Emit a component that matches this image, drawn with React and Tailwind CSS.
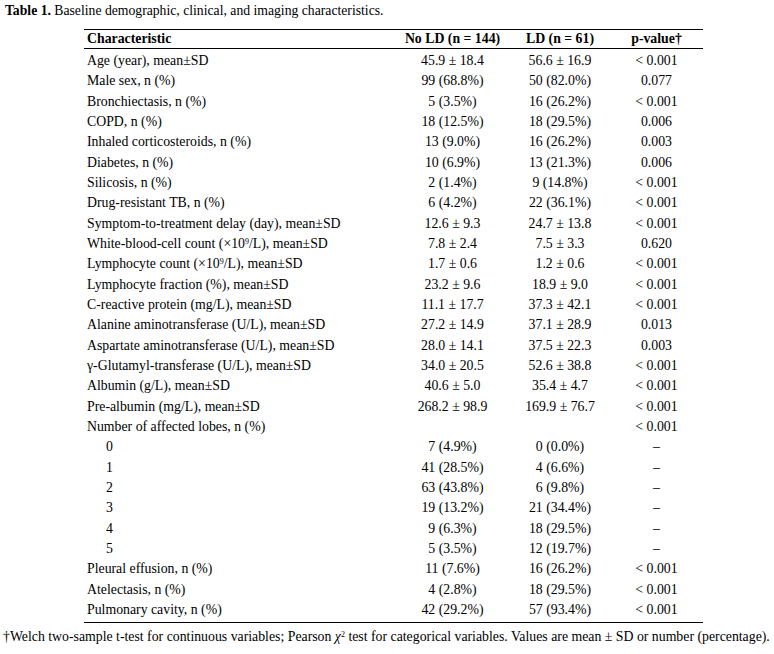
import React from "react";

const rows = [
  { c: "Age (year), mean±SD", a: "45.9 ± 18.4", b: "56.6 ± 16.9", p: "< 0.001" },
  { c: "Male sex, n (%)", a: "99 (68.8%)", b: "50 (82.0%)", p: "0.077" },
  { c: "Bronchiectasis, n (%)", a: "5 (3.5%)", b: "16 (26.2%)", p: "< 0.001" },
  { c: "COPD, n (%)", a: "18 (12.5%)", b: "18 (29.5%)", p: "0.006" },
  { c: "Inhaled corticosteroids, n (%)", a: "13 (9.0%)", b: "16 (26.2%)", p: "0.003" },
  { c: "Diabetes, n (%)", a: "10 (6.9%)", b: "13 (21.3%)", p: "0.006" },
  { c: "Silicosis, n (%)", a: "2 (1.4%)", b: "9 (14.8%)", p: "< 0.001" },
  { c: "Drug-resistant TB, n (%)", a: "6 (4.2%)", b: "22 (36.1%)", p: "< 0.001" },
  { c: "Symptom-to-treatment delay (day), mean±SD", a: "12.6 ± 9.3", b: "24.7 ± 13.8", p: "< 0.001" },
  {
    c: (
      <>
        White-blood-cell count (×10<sup className="text-[8px]">9</sup>/L), mean±SD
      </>
    ),
    a: "7.8 ± 2.4",
    b: "7.5 ± 3.3",
    p: "0.620",
  },
  {
    c: (
      <>
        Lymphocyte count (×10<sup className="text-[8px]">9</sup>/L), mean±SD
      </>
    ),
    a: "1.7 ± 0.6",
    b: "1.2 ± 0.6",
    p: "< 0.001",
  },
  { c: "Lymphocyte fraction (%), mean±SD", a: "23.2 ± 9.6", b: "18.9 ± 9.0", p: "< 0.001" },
  { c: "C-reactive protein (mg/L), mean±SD", a: "11.1 ± 17.7", b: "37.3 ± 42.1", p: "< 0.001" },
  { c: "Alanine aminotransferase (U/L), mean±SD", a: "27.2 ± 14.9", b: "37.1 ± 28.9", p: "0.013" },
  { c: "Aspartate aminotransferase (U/L), mean±SD", a: "28.0 ± 14.1", b: "37.5 ± 22.3", p: "0.003" },
  { c: "γ-Glutamyl-transferase (U/L), mean±SD", a: "34.0 ± 20.5", b: "52.6 ± 38.8", p: "< 0.001" },
  { c: "Albumin (g/L), mean±SD", a: "40.6 ± 5.0", b: "35.4 ± 4.7", p: "< 0.001" },
  { c: "Pre-albumin (mg/L), mean±SD", a: "268.2 ± 98.9", b: "169.9 ± 76.7", p: "< 0.001" },
  { c: "Number of affected lobes, n (%)", a: "", b: "", p: "< 0.001" },
  { c: "0", a: "7 (4.9%)", b: "0 (0.0%)", p: "–", sub: true },
  { c: "1", a: "41 (28.5%)", b: "4 (6.6%)", p: "–", sub: true },
  { c: "2", a: "63 (43.8%)", b: "6 (9.8%)", p: "–", sub: true },
  { c: "3", a: "19 (13.2%)", b: "21 (34.4%)", p: "–", sub: true },
  { c: "4", a: "9 (6.3%)", b: "18 (29.5%)", p: "–", sub: true },
  { c: "5", a: "5 (3.5%)", b: "12 (19.7%)", p: "–", sub: true },
  { c: "Pleural effusion, n (%)", a: "11 (7.6%)", b: "16 (26.2%)", p: "< 0.001" },
  { c: "Atelectasis, n (%)", a: "4 (2.8%)", b: "18 (29.5%)", p: "< 0.001" },
  { c: "Pulmonary cavity, n (%)", a: "42 (29.2%)", b: "57 (93.4%)", p: "< 0.001" },
];

export default function App() {
  return (
    <div
      className="w-[774px] h-[654px] bg-white text-black overflow-hidden"
      style={{ fontFamily: '"Liberation Serif", "Times New Roman", serif' }}
    >
      <div className="pl-[5px] pt-[1px] text-[13.7px] leading-[20px]">
        <span className="font-bold">Table 1.</span> Baseline demographic, clinical, and imaging characteristics.
      </div>
      <div className="ml-[84px] mt-[8px] w-[619px]">
        <table className="w-full table-fixed border-collapse text-[13.8px] leading-[20.3px]">
          <colgroup>
            <col className="w-[311px]" />
            <col className="w-[115px]" />
            <col className="w-[100px]" />
            <col className="w-[93px]" />
          </colgroup>
          <thead>
            <tr className="border-t border-b border-black font-bold">
              <th className="text-left pl-[3px] h-[18px] leading-[18px]">Characteristic</th>
              <th className="text-center leading-[18px]">No LD (n = 144)</th>
              <th className="text-center leading-[18px]">LD (n = 61)</th>
              <th className="text-center leading-[18px]">p-value†</th>
            </tr>
          </thead>
          <tbody>
            {rows.map((r, i) => {
              const first = i === 0;
              const last = i === rows.length - 1;
              const pad = first ? "pt-[2px]" : last ? "pb-[2px]" : "";
              return (
                <tr key={i} className={last ? "border-b border-black" : ""}>
                  <td className={`h-[20.33px] p-0 ${pad} ${r.sub ? "pl-[22px]" : "pl-[3px]"} whitespace-nowrap`}>{r.c}</td>
                  <td className={`p-0 ${pad} text-center whitespace-nowrap`}>{r.a}</td>
                  <td className={`p-0 ${pad} text-center whitespace-nowrap`}>{r.b}</td>
                  <td className={`p-0 ${pad} text-center whitespace-nowrap`}>{r.p}</td>
                </tr>
              );
            })}
          </tbody>
        </table>
      </div>
      <div className="pl-[3px] mt-[4px] text-[13.8px] leading-[20px] whitespace-nowrap">
        †Welch two-sample t-test for continuous variables; Pearson <i>χ</i>
        <sup className="text-[8px]">2</sup> test for categorical variables. Values are mean ± SD or number (percentage).
      </div>
    </div>
  );
}
